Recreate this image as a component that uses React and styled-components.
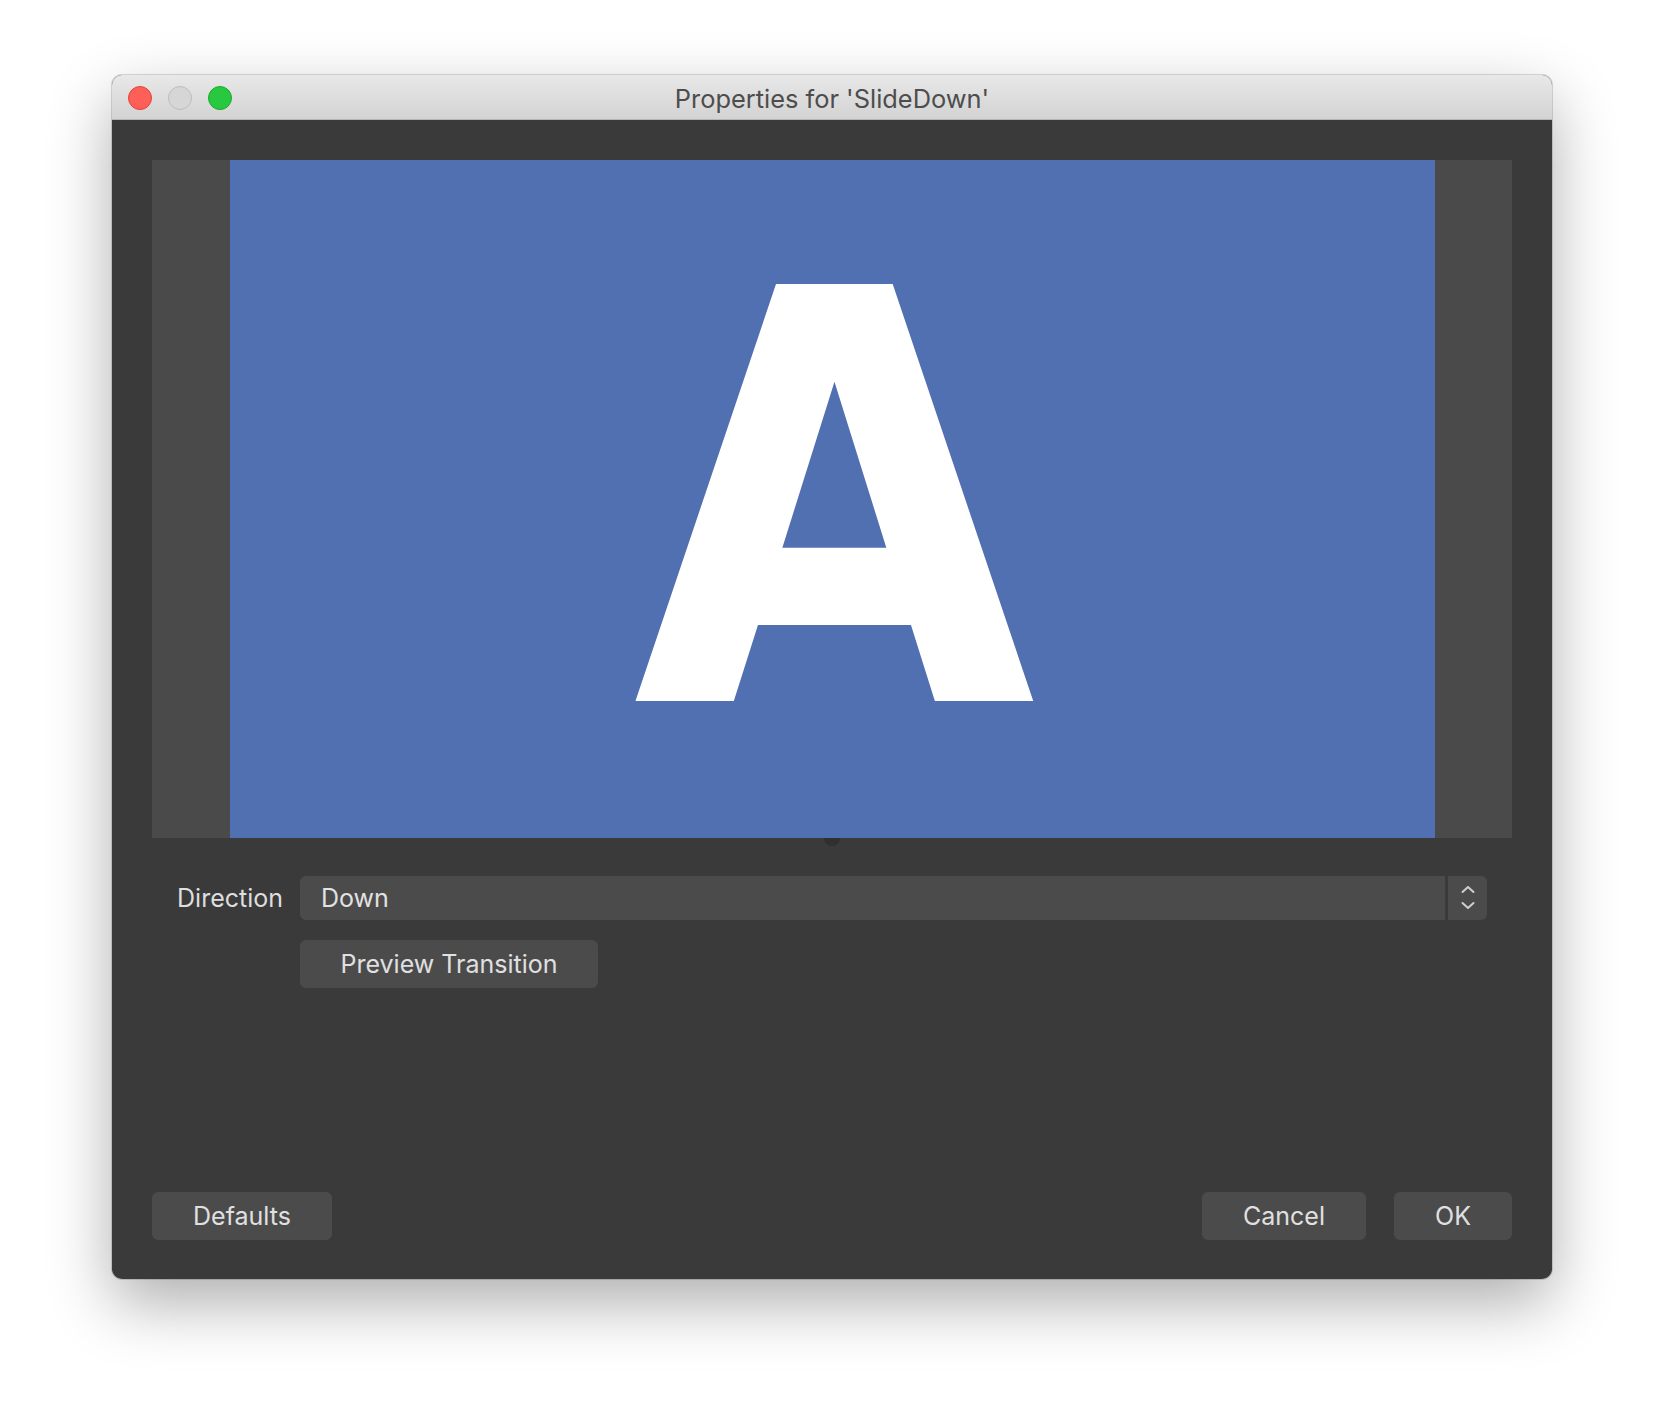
import styled, { createGlobalStyle } from 'styled-components'

const GlobalStyle = createGlobalStyle`
    html, body {
        margin: 0;
        padding: 0;
        background: #ffffff;
    }
    body {
        font-family: Inter, "Noto Sans", "Liberation Sans", sans-serif;
    }
`

const Page = styled.div`
    width: 1664px;
    height: 1428px;
    display: flex;
    justify-content: center;
    align-items: flex-start;
    padding-top: 75px;
    box-sizing: border-box;
`

const Window = styled.div`
    width: 1440px;
    height: 1204px;
    border-radius: 10px;
    overflow: hidden;
    display: flex;
    flex-direction: column;
    background: #3a3a3a;
    box-shadow: 0 24px 64px rgba(0, 0, 0, 0.32), 0 0 0 1px rgba(0, 0, 0, 0.14);
`

const TitleBar = styled.div`
    height: 45px;
    box-sizing: border-box;
    flex-shrink: 0;
    display: flex;
    align-items: center;
    padding: 2px 16px 0;
    background: linear-gradient(#e8e8e8, #d3d3d3);
    border-bottom: 1px solid #b4b4b4;
    position: relative;
`

const Lights = styled.div`
    display: flex;
    gap: 16px;
`

const Light = styled.span`
    width: 24px;
    height: 24px;
    border-radius: 50%;
    box-sizing: border-box;
    background: ${p => p.color};
    border: 1px solid ${p => p.edge};
`

const Title = styled.div`
    position: absolute;
    left: 0;
    right: 0;
    top: 8px;
    text-align: center;
    font-size: 25.4px;
    color: #4d4d4d;
    pointer-events: none;
`

const Content = styled.div`
    flex: 1;
    display: flex;
    flex-direction: column;
    padding: 40px 40px 39px;
`

const Preview = styled.div`
    height: 678px;
    background: #4a4a4a;
    display: flex;
    justify-content: center;
`

const Screen = styled.div`
    width: 1205px;
    background: #5170b1;
    display: flex;
    align-items: center;
    justify-content: center;
    overflow: hidden;
`

const BigLetter = styled.span`
    font-family: "DejaVu Sans", Verdana, sans-serif;
    font-weight: bold;
    font-size: 572px;
    line-height: 1;
    color: #ffffff;
    margin-top: 8px;
    margin-left: 5px;
    transform: scaleX(0.91);
`

const Splitter = styled.div`
    height: 38px;
    display: flex;
    justify-content: center;
`

const Handle = styled.span`
    width: 16px;
    height: 8px;
    border-radius: 0 0 8px 8px;
    background: #303030;
`

const Form = styled.div`
    display: grid;
    grid-template-columns: 106px 1fr;
    column-gap: 17px;
    row-gap: 20px;
    padding: 0 25px;
    align-items: center;
`

const Label = styled.div`
    text-align: right;
    font-size: 25px;
    color: #dedede;
    white-space: nowrap;
`

const Combo = styled.div`
    height: 44px;
    display: flex;
    background: #4b4b4b;
    border-radius: 6px;
    overflow: hidden;
`

const ComboText = styled.div`
    flex: 1;
    display: flex;
    align-items: center;
    padding-left: 21px;
    font-size: 25px;
    color: #e2e2e2;
`

const ComboArrows = styled.div`
    width: 39px;
    border-left: 3px solid #3a3a3a;
    display: flex;
    align-items: center;
    justify-content: center;
`

const Button = styled.button`
    height: 48px;
    width: ${p => p.w}px;
    border: none;
    border-radius: 6px;
    background: #4b4b4b;
    color: #e0e0e0;
    font-family: inherit;
    font-size: 25px;
    padding: 0;
    justify-self: start;
`

const Spacer = styled.div`
    flex: 1;
`

const Footer = styled.div`
    display: flex;
    align-items: center;
    gap: 28px;
`

function UpDown() {
    return (
        <svg width="16" height="26" viewBox="0 0 16 26" fill="none" stroke="#cfcfcf" strokeWidth="2" strokeLinecap="round" strokeLinejoin="round">
            <polyline points="2.5,7 8,2 13.5,7" />
            <polyline points="2.5,18 8,23 13.5,18" />
        </svg>
    )
}

function App() {
    return (
        <>
            <GlobalStyle />
            <Page>
                <Window>
                    <TitleBar>
                        <Lights>
                            <Light color="#fe5f57" edge="#e0443e" />
                            <Light color="#d6d6d6" edge="#bdbdbd" />
                            <Light color="#28c840" edge="#1aab29" />
                        </Lights>
                        <Title>Properties for 'SlideDown'</Title>
                    </TitleBar>
                    <Content>
                        <Preview>
                            <Screen>
                                <BigLetter>A</BigLetter>
                            </Screen>
                        </Preview>
                        <Splitter>
                            <Handle />
                        </Splitter>
                        <Form>
                            <Label>Direction</Label>
                            <Combo>
                                <ComboText>Down</ComboText>
                                <ComboArrows>
                                    <UpDown />
                                </ComboArrows>
                            </Combo>
                            <span />
                            <Button w={298}>Preview Transition</Button>
                        </Form>
                        <Spacer />
                        <Footer>
                            <Button w={180}>Defaults</Button>
                            <Spacer />
                            <Button w={164}>Cancel</Button>
                            <Button w={118}>OK</Button>
                        </Footer>
                    </Content>
                </Window>
            </Page>
        </>
    )
}

export default App
